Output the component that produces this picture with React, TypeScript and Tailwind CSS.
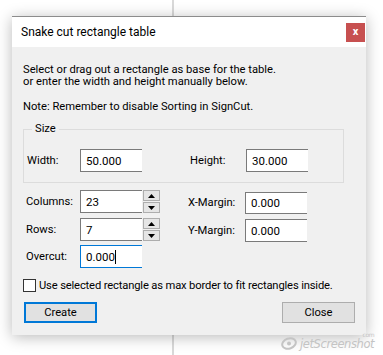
import React from "react";

const font = { fontFamily: 'Roboto, "Noto Sans", sans-serif' };

function Spin() {
  return (
    <div className="flex flex-col gap-[1px] ml-[1px] h-[23px]">
      <div className="w-[17px] h-[11px] border border-[#adadad] bg-[#e5e5e5] flex items-center justify-center">
        <svg width="7" height="4" viewBox="0 0 7 4"><path d="M0 4 L3.5 0 L7 4 Z" fill="#000" /></svg>
      </div>
      <div className="w-[17px] h-[11px] border border-[#adadad] bg-[#e5e5e5] flex items-center justify-center">
        <svg width="7" height="4" viewBox="0 0 7 4"><path d="M0 0 L7 0 L3.5 4 Z" fill="#000" /></svg>
      </div>
    </div>
  );
}

function Input({ value, h = 23, focused = false }: { value: string; h?: number; focused?: boolean }) {
  return (
    <div
      className={
        "w-[62px] bg-white border border-r-0 flex items-center pl-[5px] text-[11.5px] text-black " +
        (focused ? "border-[#0078d7]" : "border-[#7a7a7a]")
      }
      style={{ height: h }}
    >
      <span>{value}</span>
      {focused && <span className="w-[1px] h-[14px] bg-black" />}
    </div>
  );
}

export default function App() {
  return (
    <div className="w-[383px] h-[355px] bg-white relative overflow-hidden" style={font}>
      <div className="absolute left-[172px] top-0 bottom-0 w-[2px] bg-[#d9d9d9]" />
      <div className="absolute left-[12px] top-[16px] w-[354px] h-[319px] flex flex-col border-t border-[#8c8c8c] shadow-[0_2px_14px_rgba(0,0,0,0.28)] bg-[#f0f0f0]">
        <div className="h-[30px] bg-white flex items-center justify-between pl-[9px] pr-[1px]">
          <span className="text-[12px] text-black">Snake cut rectangle table</span>
          <div className="w-[19px] h-[19px] bg-[#c75050] flex items-center justify-center text-white text-[11px] font-bold leading-none pb-[1px]">x</div>
        </div>
        <div className="flex-1 bg-[#f0f0f0] pl-[11px] pr-[22px] pt-[17px] text-[11.2px] text-black leading-[12px]">
          <div>Select or drag out a rectangle as base for the table.</div>
          <div>or enter the width and height manually below.</div>
          <div className="mt-[13px]">Note: Remember to disable Sorting in SignCut.</div>
          <fieldset className="mt-[10px] border border-[#dcdcdc] pl-[3px] pb-[10px]">
            <legend className="ml-[5px] px-[3px] leading-[12px]">Size</legend>
            <div className="flex items-center mt-[14px]">
              <span className="w-[53px]">Width:</span>
              <Input value="50.000" />
              <span className="w-[48px]" />
              <span className="w-[56px]">Height:</span>
              <Input value="30.000" />
            </div>
          </fieldset>
          <div className="flex items-start mt-[7px] h-[23px]">
            <span className="w-[57px] pl-[3px] h-[23px] flex items-center">Columns:</span>
            <Input value="23" />
            <Spin />
            <span className="w-[28px]" />
            <span className="w-[57px] h-[23px] flex items-center mt-[1px]">X-Margin:</span>
            <div className="mt-[2px]"><Input value="0.000" h={22} /></div>
          </div>
          <div className="flex items-start mt-[5px] h-[23px]">
            <span className="w-[57px] pl-[3px] h-[23px] flex items-center">Rows:</span>
            <Input value="7" />
            <Spin />
            <span className="w-[28px]" />
            <span className="w-[57px] h-[23px] flex items-center mt-[1px]">Y-Margin:</span>
            <div className="mt-[1px]"><Input value="0.000" h={23} /></div>
          </div>
          <div className="flex items-center mt-[4px] h-[23px]">
            <span className="w-[57px] pl-[3px]">Overcut:</span>
            <Input value="0.000" focused />
          </div>
          <div className="flex items-center mt-[11px] whitespace-nowrap h-[13px]">
            <div className="w-[13px] h-[13px] border border-[#333] bg-white shrink-0" />
            <span className="ml-[3px] tracking-[-0.15px]">Use selected rectangle as max border to fit rectangles inside.</span>
          </div>
          <div className="flex justify-between mt-[10px] pl-[1px]">
            <div className="w-[73px] h-[21px] border-2 border-[#0078d7] bg-[#e1e1e1] flex items-center justify-center">Create</div>
            <div className="w-[73px] h-[21px] border border-[#adadad] bg-[#e1e1e1] flex items-center justify-center mr-[-11px]">Close</div>
          </div>
        </div>
      </div>
      <div className="absolute left-[280px] top-[337px] flex items-end text-[#c4c4c4]">
        <svg width="18" height="13" viewBox="0 0 18 13" className="mb-[1px]">
          <ellipse cx="9" cy="6.5" rx="7" ry="5" fill="none" stroke="#c4c4c4" strokeWidth="2" transform="rotate(-20 9 6.5)" />
          <circle cx="9" cy="6.5" r="2" fill="#c4c4c4" />
        </svg>
        <span className="italic text-[11.5px] leading-[14px] ml-[2px] relative" style={{ fontFamily: '"DejaVu Sans", sans-serif', letterSpacing: "-0.4px" }}>
          jetScreenshot
          <span className="absolute right-[0px] top-[-5px] text-[6px] leading-[6px] not-italic">com</span>
        </span>
      </div>
    </div>
  );
}
